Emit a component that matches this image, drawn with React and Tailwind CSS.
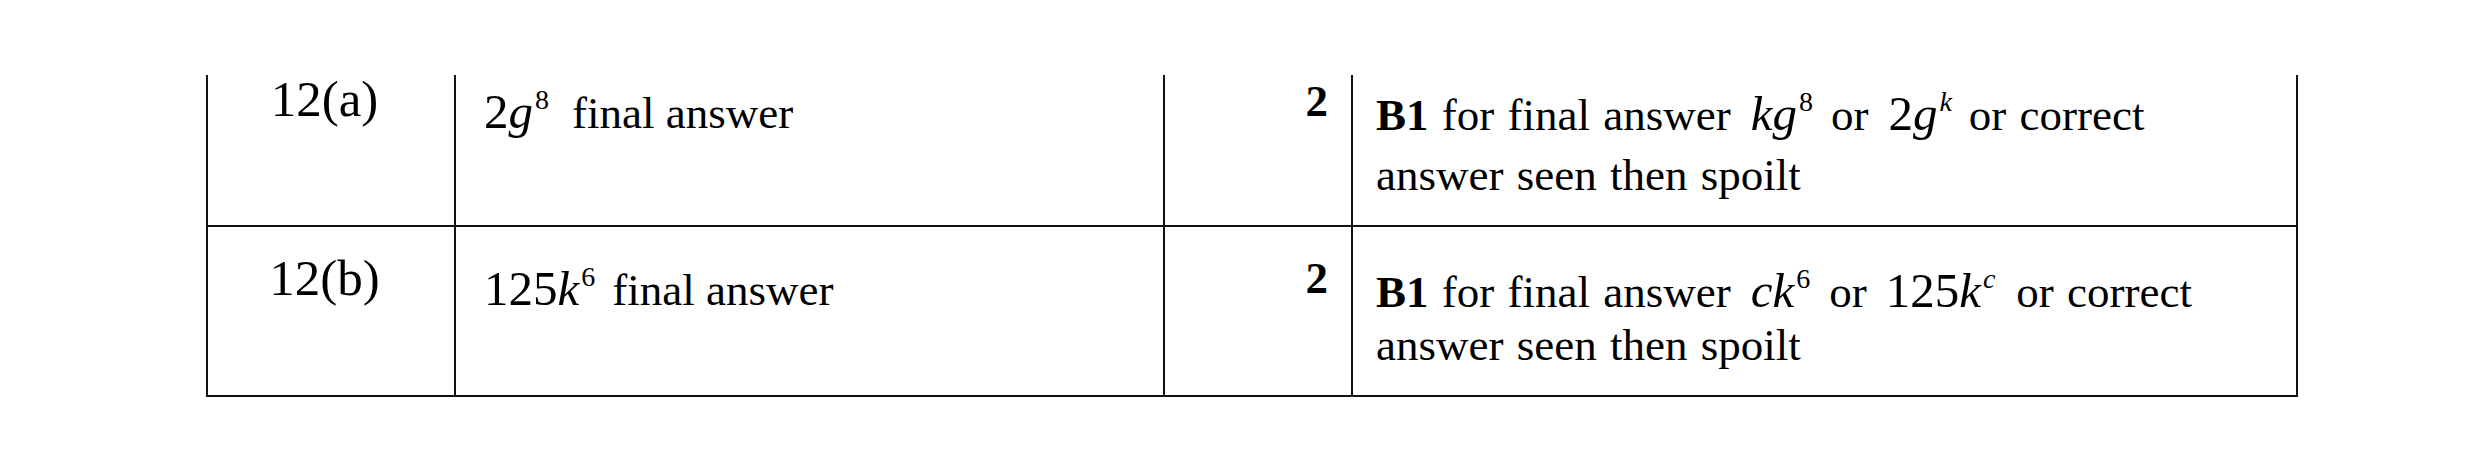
import React from "react";

function Sup({ children, italic }) {
  return (
    <span
      className={
        "relative -top-[19px] ml-[2px] text-[28px] leading-none " +
        (italic ? "italic" : "")
      }
    >
      {children}
    </span>
  );
}

function M({ children, className = "" }) {
  return <span className={"text-[49px] leading-none " + className}>{children}</span>;
}

export default function App() {
  return (
    <div
      className="w-[2481px] h-[473px] bg-white text-black pt-[75px]"
      style={{ fontFamily: '"Liberation Serif", "Times New Roman", serif' }}
    >
      <div className="ml-[206px] w-[2092px] border-l-2 border-[#111] grid grid-cols-[248px_709px_188px_945px] text-[45px] leading-[53px]">
        {/* Row 1 */}
        <div className="h-[152px] border-r-2 border-b-2 border-[#111] text-center text-[51px] leading-[49px] pr-[13px] pt-0">
          12(a)
        </div>
        <div className="h-[152px] border-r-2 border-b-2 border-[#111] pl-[28px] pt-[12px] whitespace-nowrap">
          <M>
            2<span className="italic">g</span>
            <Sup>8</Sup>
          </M>
          <span className="ml-[23px]">final answer</span>
        </div>
        <div className="h-[152px] border-r-2 border-b-2 border-[#111] text-right pr-[23px] pt-0 font-bold">
          2
        </div>
        <div className="h-[152px] border-r-2 border-b-2 border-[#111] pl-[23px] pt-[10px] leading-[60px] whitespace-nowrap [word-spacing:2px]">
          <span className="font-bold">B1</span> for final answer
          <M className="ml-[20px] italic">
            kg
            <Sup>
              <span className="not-italic">8</span>
            </Sup>
          </M>
          <span className="ml-[18px]">or</span>
          <M className="ml-[20px]">
            2<span className="italic">g</span>
            <Sup italic>k</Sup>
          </M>
          <span className="ml-[17px]">or correct</span>
          <br />
          answer seen then spoilt
        </div>

        {/* Row 2 */}
        <div className="h-[170px] border-r-2 border-b-2 border-[#111] text-center text-[51px] leading-[49px] pr-[13px] pt-[27px]">
          12(b)
        </div>
        <div className="h-[170px] border-r-2 border-b-2 border-[#111] pl-[28px] pt-[37px] whitespace-nowrap">
          <M>
            125<span className="italic">k</span>
            <Sup>6</Sup>
          </M>
          <span className="ml-[17px]">final answer</span>
        </div>
        <div className="h-[170px] border-r-2 border-b-2 border-[#111] text-right pr-[23px] pt-[25px] font-bold">
          2
        </div>
        <div className="h-[170px] border-r-2 border-b-2 border-[#111] pl-[23px] pt-[39px] whitespace-nowrap [word-spacing:2px]">
          <span className="font-bold">B1</span> for final answer
          <M className="ml-[20px] italic">
            ck
            <Sup>
              <span className="not-italic">6</span>
            </Sup>
          </M>
          <span className="ml-[19px]">or</span>
          <M className="ml-[19px]">
            125<span className="italic">k</span>
            <Sup italic>c</Sup>
          </M>
          <span className="ml-[21px]">or correct</span>
          <br />
          answer seen then spoilt
        </div>
      </div>
    </div>
  );
}
